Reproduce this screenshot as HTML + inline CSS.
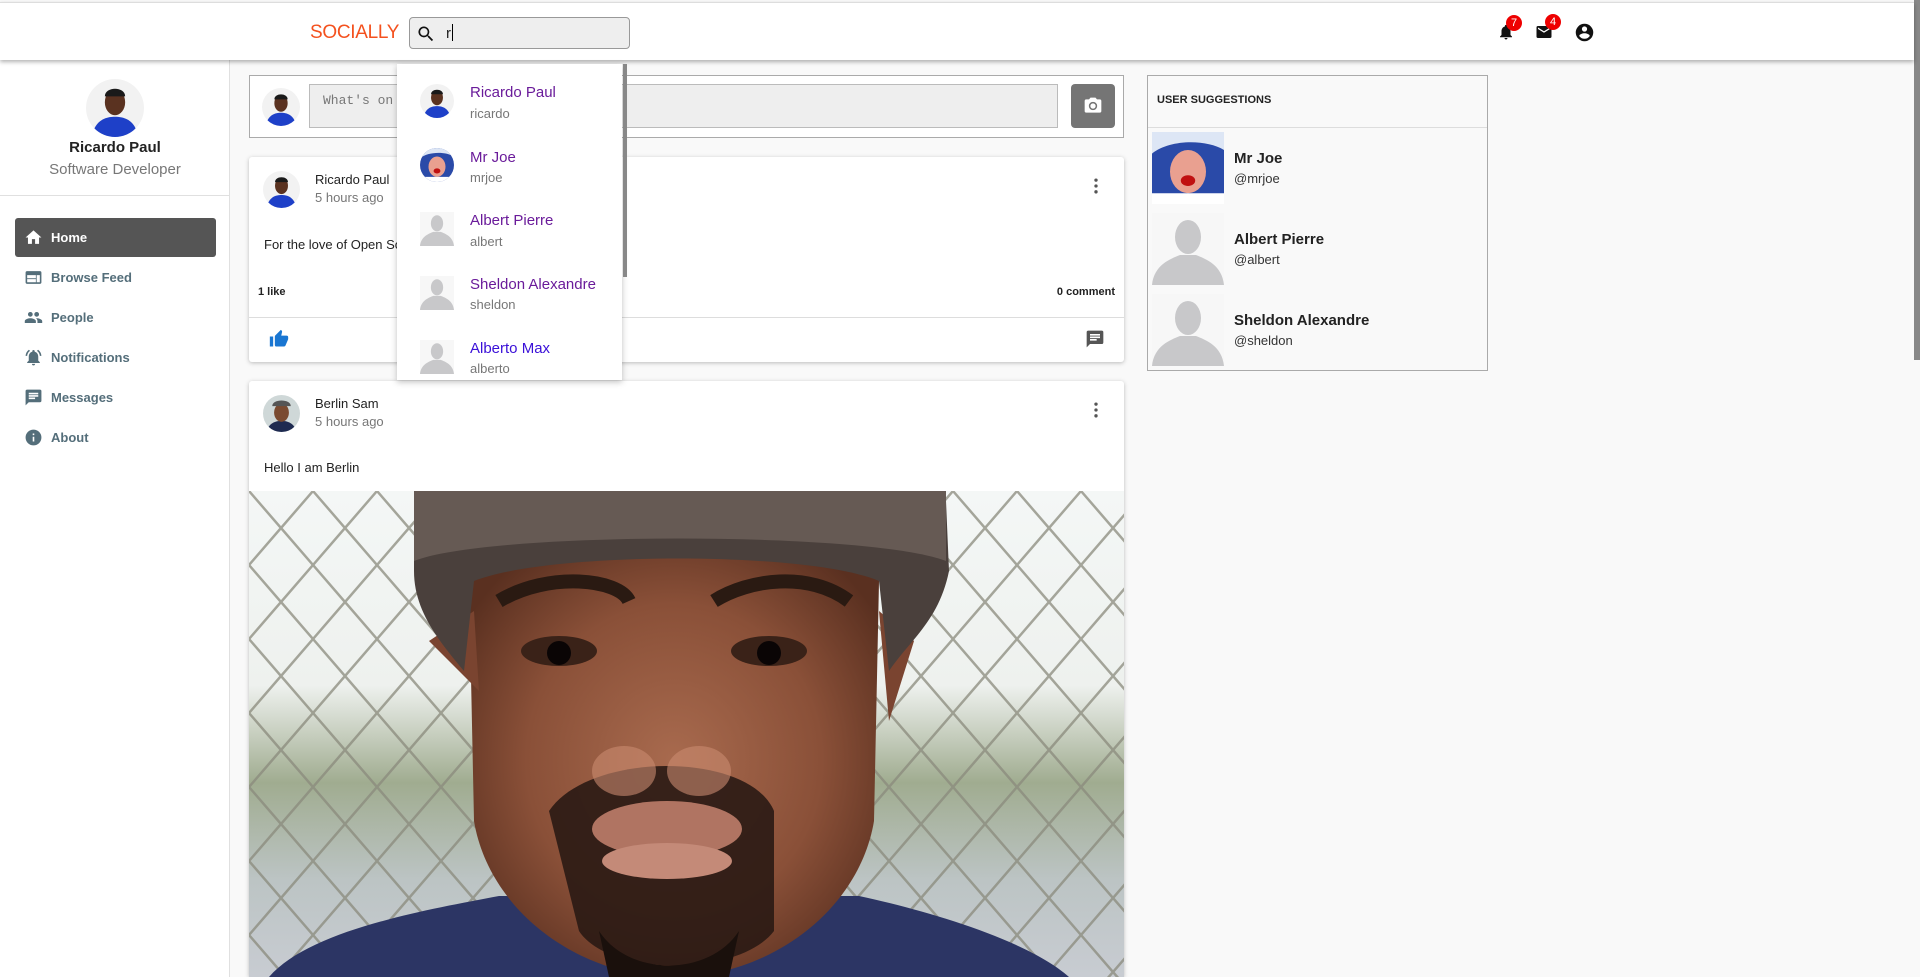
<!DOCTYPE html>
<html style="overflow:hidden;height:977px"><head><meta charset="utf-8"><style>
*{box-sizing:border-box;margin:0;padding:0}
body{width:1920px;height:977px;overflow:hidden;background:#f9f9f9;font-family:"Liberation Sans",Roboto,sans-serif;position:relative;color:#222}
.abs{position:absolute}
.hdr{left:0;top:2px;width:1914px;height:58px;background:#fff;box-shadow:0 2px 4px rgba(0,0,0,.3);border-top:1px solid #ddd;z-index:5}
.logo{left:310px;top:19px;color:#f4511e;font-size:19px;font-weight:500;letter-spacing:-0.3px}
.search{left:409px;top:14px;width:221px;height:32px;background:#eee;border:1px solid #999;border-radius:4px}
.side{left:0;top:60px;width:230px;height:917px;background:#fff;border-right:1px solid #e0e0e0}
.nav{position:absolute;left:15px;width:201px;height:39px;font-size:13px;font-weight:bold;color:#546e7a;display:flex;align-items:center;padding-left:36px}
.nav svg{position:absolute;left:9px;top:10px}
.card{background:#fff;box-shadow:0 1px 4px rgba(0,0,0,.25);border-radius:3px}
.av{border-radius:50%;overflow:hidden;position:absolute}
.dd{left:397px;top:64px;width:225px;height:316px;background:#fff;box-shadow:0 2px 6px rgba(0,0,0,.25);z-index:6;overflow:hidden}
.di{position:absolute;left:73px;font-size:15px;color:#6a1b9a}
.du{position:absolute;left:73px;font-size:13px;color:#777}
.sn{position:absolute;left:86px;font-size:15px;font-weight:bold;color:#222}
.sh{position:absolute;left:86px;font-size:13px;color:#333}
.badge{position:absolute;width:16px;height:16px;border-radius:50%;background:#e00;color:#fff;font-size:11px;text-align:center;line-height:16px}
</style></head><body>
<svg width="0" height="0" style="position:absolute"><defs>
<symbol id="ph" viewBox="0 0 72 72"><rect width="72" height="72" fill="#f7f7f7"/><ellipse cx="36" cy="24" rx="13" ry="17" fill="#c8c8ca"/><path d="M0 72 C2 52 18 46 28 42 L44 42 C54 46 70 52 72 72Z" fill="#c8c8ca"/></symbol>
<symbol id="rp" viewBox="0 0 40 40"><rect width="40" height="40" fill="#f2f2f2"/><path d="M4 40 C6 28 14 26 20 26 C26 26 34 28 36 40Z" fill="#1e40c8"/><ellipse cx="20" cy="16" rx="7" ry="9" fill="#5a3220"/><path d="M13 12 C13 5 27 5 27 12 Z" fill="#1a1a1a"/></symbol>
<symbol id="jo" viewBox="0 0 40 40"><rect width="40" height="40" fill="#2a4aa8"/><ellipse cx="20" cy="22" rx="10" ry="12" fill="#e9a090"/><ellipse cx="20" cy="27" rx="4" ry="3" fill="#c01010"/><path d="M0 0 H40 V10 C30 4 10 4 0 12Z" fill="#dde6f5"/><path d="M0 34 H40 V40 H0Z" fill="#fff"/></symbol>
</defs></svg>

<div class="abs hdr">
 <div class="abs logo">SOCIALLY</div>
 <div class="abs search"><svg class="abs" style="left:6px;top:6px" width="20" height="20" viewBox="0 0 24 24"><path d="M15.5 14h-.8l-.3-.3A6.5 6.5 0 1 0 9.5 16a6.5 6.5 0 0 0 4.2-1.6l.3.3v.8l5 5 1.5-1.5-5-5zm-6 0a4.5 4.5 0 1 1 0-9 4.5 4.5 0 0 1 0 9z" fill="#111"/></svg><div class="abs" style="left:36px;top:6px;font-size:15px">r<span style="display:inline-block;width:1px;height:17px;background:#000;vertical-align:-3px;margin-left:1px"></span></div></div>
 <svg class="abs" style="left:1497px;top:19px" width="18" height="20" viewBox="0 0 24 24"><path d="M12 22c1.1 0 2-.9 2-2h-4c0 1.1.9 2 2 2zm6-6v-5c0-3.1-1.6-5.6-4.5-6.3V4a1.5 1.5 0 0 0-3 0v.7C7.6 5.4 6 7.9 6 11v5l-2 2v1h16v-1l-2-2z" fill="#111"/></svg>
 <div class="badge" style="left:1506px;top:12px">7</div>
 <svg class="abs" style="left:1535px;top:20px" width="18" height="18" viewBox="0 0 24 24"><path d="M20 4H4a2 2 0 0 0-2 2v12a2 2 0 0 0 2 2h16a2 2 0 0 0 2-2V6a2 2 0 0 0-2-2zm0 4-8 5-8-5V6l8 5 8-5v2z" fill="#111"/></svg>
 <div class="badge" style="left:1545px;top:11px">4</div>
 <svg class="abs" style="left:1574px;top:19px" width="21" height="21" viewBox="0 0 24 24"><path d="M12 2a10 10 0 1 0 0 20 10 10 0 0 0 0-20zm0 3a3 3 0 1 1 0 6 3 3 0 0 1 0-6zm0 14.2a7.2 7.2 0 0 1-6-3.2c0-2 4-3.1 6-3.1s6 1.1 6 3.1a7.2 7.2 0 0 1-6 3.2z" fill="#111"/></svg>
</div>
<div class="abs" style="left:1914px;top:0;width:6px;height:360px;background:#888"></div>

<div class="abs side">
 <svg class="av" style="left:86px;top:19px" width="58" height="58"><use href="#rp"/></svg>
 <div class="abs" style="left:0;width:230px;top:79px;text-align:center;font-size:15px;font-weight:bold">Ricardo Paul</div>
 <div class="abs" style="left:0;width:230px;top:101px;text-align:center;font-size:15px;color:#777">Software Developer</div>
 <div class="abs" style="left:0;top:135px;width:230px;height:1px;background:#e0e0e0"></div>
 <div class="nav" style="top:158px;background:#555;color:#fff;border-radius:3px"><svg width="19" height="19" viewBox="0 0 24 24"><path d="M10 20v-6h4v6h5v-8h3L12 3 2 12h3v8z" fill="#fff"/></svg>Home</div>
 <div class="nav" style="top:198px"><svg width="19" height="19" viewBox="0 0 24 24"><path d="M20 4H4a2 2 0 0 0-2 2v12a2 2 0 0 0 2 2h16a2 2 0 0 0 2-2V6a2 2 0 0 0-2-2zm-5 14H4v-4h11v4zm0-5H4V9h11v4zm5 5h-4V9h4v9z" fill="#546e7a"/></svg>Browse Feed</div>
 <div class="nav" style="top:238px"><svg width="19" height="19" viewBox="0 0 24 24"><path d="M16 11a3 3 0 1 0 0-6 3 3 0 0 0 0 6zm-8 0a3 3 0 1 0 0-6 3 3 0 0 0 0 6zm0 2c-2.3 0-7 1.2-7 3.5V19h14v-2.5C15 14.2 10.3 13 8 13zm8 0h-1c1.2.8 2 2 2 3.5V19h6v-2.5c0-2.3-4.7-3.5-7-3.5z" fill="#546e7a"/></svg>People</div>
 <div class="nav" style="top:278px"><svg width="19" height="19" viewBox="0 0 24 24"><path d="M12 22c1.1 0 2-.9 2-2h-4c0 1.1.9 2 2 2zm6-6v-5c0-3.1-1.6-5.6-4.5-6.3V4a1.5 1.5 0 0 0-3 0v.7C7.6 5.4 6 7.9 6 11v5l-2 2v1h16v-1l-2-2zM7.6 3.6 6.2 2.2A10.4 10.4 0 0 0 2 10h2a8.5 8.5 0 0 1 3.6-6.4zM20 10h2a10.4 10.4 0 0 0-4.2-7.8l-1.4 1.4A8.5 8.5 0 0 1 20 10z" fill="#546e7a"/></svg>Notifications</div>
 <div class="nav" style="top:318px"><svg width="19" height="19" viewBox="0 0 24 24"><path d="M20 2H4a2 2 0 0 0-2 2v18l4-4h14a2 2 0 0 0 2-2V4a2 2 0 0 0-2-2zM6 9h12v2H6V9zm8 5H6v-2h8v2zm4-6H6V6h12v2z" fill="#546e7a"/></svg>Messages</div>
 <div class="nav" style="top:358px"><svg width="19" height="19" viewBox="0 0 24 24"><path d="M12 2a10 10 0 1 0 0 20 10 10 0 0 0 0-20zm1 15h-2v-6h2v6zm0-8h-2V7h2v2z" fill="#546e7a"/></svg>About</div>
</div>

<!-- composer -->
<div class="abs" style="left:249px;top:75px;width:875px;height:63px;background:#fff;border:1px solid #aaa">
 <svg class="av" style="left:12px;top:12px" width="38" height="38"><use href="#rp"/></svg>
 <div class="abs" style="left:59px;top:8px;width:749px;height:44px;background:#eee;border:1px solid #bbb;font-family:'Liberation Mono',monospace;font-size:13px;color:#777;padding:8px 13px">What's on your mind?</div>
 <div class="abs" style="left:821px;top:8px;width:44px;height:44px;background:#757575;border-radius:4px"><svg class="abs" style="left:12px;top:12px" width="20" height="20" viewBox="0 0 24 24"><circle cx="12" cy="12" r="3.2" fill="#fff"/><path d="M9 2 7.2 4H4a2 2 0 0 0-2 2v12a2 2 0 0 0 2 2h16a2 2 0 0 0 2-2V6a2 2 0 0 0-2-2h-3.2L15 2H9zm3 15a5 5 0 1 1 0-10 5 5 0 0 1 0 10z" fill="#fff"/></svg></div>
</div>

<!-- post 1 -->
<div class="abs card" style="left:249px;top:157px;width:875px;height:205px">
 <svg class="av" style="left:14px;top:14px" width="37" height="37"><use href="#rp"/></svg>
 <div class="abs" style="left:66px;top:15px;font-size:13px">Ricardo Paul</div>
 <div class="abs" style="left:66px;top:33px;font-size:13px;color:#777">5 hours ago</div>
 <svg class="abs" style="left:837px;top:19px" width="20" height="20" viewBox="0 0 24 24"><circle cx="12" cy="5" r="2" fill="#555"/><circle cx="12" cy="12" r="2" fill="#555"/><circle cx="12" cy="19" r="2" fill="#555"/></svg>
 <div class="abs" style="left:15px;top:80px;font-size:13px">For the love of Open Source</div>
 <div class="abs" style="left:9px;top:129px;font-size:11px;font-weight:bold">1 like</div>
 <div class="abs" style="right:9px;top:129px;font-size:11px;font-weight:bold">0 comment</div>
 <div class="abs" style="left:0;top:160px;width:875px;height:1px;background:#ddd"></div>
 <svg class="abs" style="left:20px;top:172px" width="20" height="20" viewBox="0 0 24 24"><path d="M1 21h4V9H1v12zm22-11a2 2 0 0 0-2-2h-6.3l1-4.6v-.3c0-.4-.2-.8-.4-1.1L14.2 1 7.6 7.6C7.2 8 7 8.5 7 9v10a2 2 0 0 0 2 2h9c.8 0 1.5-.5 1.8-1.2l3-7.1c.1-.2.2-.5.2-.7v-2z" fill="#1976d2"/></svg>
 <svg class="abs" style="left:836px;top:172px" width="20" height="20" viewBox="0 0 24 24"><path d="M20 2H4a2 2 0 0 0-2 2v18l4-4h14a2 2 0 0 0 2-2V4a2 2 0 0 0-2-2zM6 9h12v2H6V9zm8 5H6v-2h8v2zm4-6H6V6h12v2z" fill="#555"/></svg>
</div>

<!-- post 2 -->
<div class="abs card" style="left:249px;top:381px;width:875px;height:596px;overflow:hidden;border-radius:3px 3px 0 0">
 <svg class="av" style="left:14px;top:14px" width="37" height="37" viewBox="0 0 40 40"><rect width="40" height="40" fill="#cfd8d8"/><path d="M4 40 C6 30 14 28 20 28 C26 28 34 30 36 40Z" fill="#1e2a50"/><ellipse cx="20" cy="19" rx="8" ry="10" fill="#7a4a30"/><path d="M10 12 C10 4 30 4 30 12Z" fill="#555"/></svg>
 <div class="abs" style="left:66px;top:15px;font-size:13px">Berlin Sam</div>
 <div class="abs" style="left:66px;top:33px;font-size:13px;color:#777">5 hours ago</div>
 <svg class="abs" style="left:837px;top:19px" width="20" height="20" viewBox="0 0 24 24"><circle cx="12" cy="5" r="2" fill="#555"/><circle cx="12" cy="12" r="2" fill="#555"/><circle cx="12" cy="19" r="2" fill="#555"/></svg>
 <div class="abs" style="left:15px;top:79px;font-size:13px">Hello I am Berlin</div>
 <svg class="abs" style="left:0;top:110px" width="875" height="486" viewBox="0 0 875 486">
  <defs>
   <linearGradient id="bg" x1="0" y1="0" x2="0" y2="1"><stop offset="0" stop-color="#f4f7f6"/><stop offset=".4" stop-color="#eef1ee"/><stop offset=".6" stop-color="#a0ac90"/><stop offset=".8" stop-color="#bcc4c4"/><stop offset="1" stop-color="#c8ccd2"/></linearGradient>
   <pattern id="fence" width="64" height="74" patternUnits="userSpaceOnUse"><path d="M0 0 L32 37 L0 74 M64 0 L32 37 L64 74" stroke="#8a8a7c" stroke-width="2.5" fill="none"/></pattern>
   <radialGradient id="sk" cx=".5" cy=".5" r=".6"><stop offset="0" stop-color="#a86a4e"/><stop offset=".6" stop-color="#8a5038"/><stop offset="1" stop-color="#5a3020"/></radialGradient>
  </defs>
  <rect width="875" height="486" fill="url(#bg)"/>
  <rect width="875" height="486" fill="url(#fence)" opacity=".75"/>
  <path d="M20 486 C60 440 170 420 250 405 L610 405 C680 420 780 450 820 486Z" fill="#2c3564"/>
  <path d="M220 90 C230 40 620 40 630 90 L625 330 C610 420 520 486 425 486 C330 486 240 420 225 330Z" fill="url(#sk)"/>
  <path d="M180 150 L225 120 L230 200 Z" fill="#7a4430"/><path d="M630 120 L665 150 L640 230 Z" fill="#7a4430"/>
  <path d="M300 320 C340 260 500 260 525 320 L525 440 C490 486 360 486 330 440Z" fill="#2a1a14" opacity=".9"/>
  <ellipse cx="418" cy="338" rx="75" ry="28" fill="#b07462"/>
  <ellipse cx="418" cy="370" rx="65" ry="18" fill="#c48a78"/>
  <path d="M350 440 C380 486 460 486 490 440 L480 486 L360 486Z" fill="#1a100c"/>
  <ellipse cx="375" cy="280" rx="32" ry="25" fill="#c98a70" opacity=".6"/><ellipse cx="450" cy="280" rx="32" ry="25" fill="#c98a70" opacity=".6"/>
  <path d="M250 110 C300 80 370 88 380 110" stroke="#2a1a12" stroke-width="14" fill="none"/>
  <path d="M465 110 C500 88 560 80 600 110" stroke="#2a1a12" stroke-width="14" fill="none"/>
  <ellipse cx="310" cy="160" rx="38" ry="15" fill="#3a2218"/><ellipse cx="520" cy="160" rx="38" ry="15" fill="#3a2218"/>
  <circle cx="310" cy="162" r="12" fill="#0a0505"/><circle cx="520" cy="162" r="12" fill="#0a0505"/>
  <path d="M165 10 C170 -10 690 -10 697 10 L700 80 C690 130 660 150 640 180 L630 90 C560 60 300 60 225 90 L215 180 C190 150 165 120 165 80Z" fill="#4a403c"/>
  <path d="M165 0 H697 V70 C620 40 240 40 165 70Z" fill="#665a54"/>
 </svg>
</div>

<!-- dropdown -->
<div class="abs dd">
 <svg class="av" style="left:23px;top:20px" width="34" height="34"><use href="#rp"/></svg>
 <div class="di" style="top:20px">Ricardo Paul</div><div class="du" style="top:42px">ricardo</div>
 <svg class="av" style="left:23px;top:84px" width="34" height="34"><use href="#jo"/></svg>
 <div class="di" style="top:85px">Mr Joe</div><div class="du" style="top:106px">mrjoe</div>
 <svg class="abs" style="left:23px;top:148px" width="34" height="34"><use href="#ph"/></svg>
 <div class="di" style="top:148px">Albert Pierre</div><div class="du" style="top:170px">albert</div>
 <svg class="abs" style="left:23px;top:212px" width="34" height="34"><use href="#ph"/></svg>
 <div class="di" style="top:212px">Sheldon Alexandre</div><div class="du" style="top:233px">sheldon</div>
 <svg class="abs" style="left:23px;top:276px" width="34" height="34"><use href="#ph"/></svg>
 <div class="di" style="top:276px;color:#3a10d8">Alberto Max</div><div class="du" style="top:297px">alberto</div>
</div>
<div class="abs" style="left:623px;top:64px;width:4px;height:213px;background:#888;z-index:7"></div>

<!-- suggestions -->
<div class="abs" style="left:1147px;top:75px;width:341px;height:296px;border:1px solid #aaa;background:#f9f9f9">
 <div class="abs" style="left:9px;top:18px;font-size:11px;font-weight:bold">USER SUGGESTIONS</div>
 <div class="abs" style="left:0;top:51px;width:339px;height:1px;background:#ddd"></div>
 <svg class="abs" style="left:4px;top:56px" width="72" height="72" viewBox="0 0 40 40" preserveAspectRatio="none"><use href="#jo"/></svg>
 <div class="sn" style="top:74px">Mr Joe</div><div class="sh" style="top:95px">@mrjoe</div>
 <svg class="abs" style="left:4px;top:137px" width="72" height="72"><use href="#ph"/></svg>
 <div class="sn" style="top:155px">Albert Pierre</div><div class="sh" style="top:176px">@albert</div>
 <svg class="abs" style="left:4px;top:218px" width="72" height="72"><use href="#ph"/></svg>
 <div class="sn" style="top:236px">Sheldon Alexandre</div><div class="sh" style="top:257px">@sheldon</div>
</div>
</body></html>
